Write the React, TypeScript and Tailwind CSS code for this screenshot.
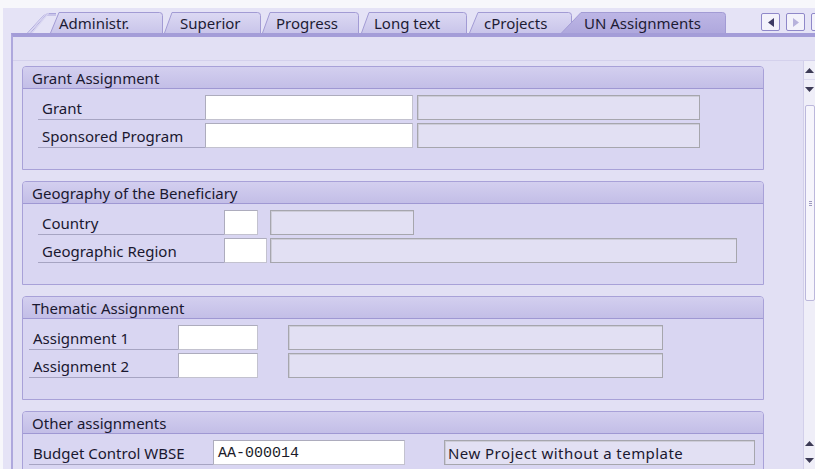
import React from "react";

type TabDef = { label: string; width: number; ml: number; slant: number; pl: number; active?: boolean };

const tabs: TabDef[] = [
  { label: "Administr.", width: 113, ml: -7, slant: 9, pl: 9 },
  { label: "Superior", width: 97, ml: 1, slant: 8, pl: 16 },
  { label: "Progress", width: 97, ml: 1, slant: 8, pl: 14 },
  { label: "Long text", width: 106, ml: 2, slant: 8, pl: 13 },
  { label: "cProjects", width: 103, ml: 2, slant: 9, pl: 15 },
  { label: "UN Assignments", width: 165, ml: -11, slant: 20, pl: 23, active: true },
];

function Tab({ t }: { t: TabDef }) {
  const w = t.width;
  const h = 21;
  const fillId = t.active ? "tabActive" : "tabIdle";
  return (
    <div
      className="relative flex-none h-[21px] flex items-center"
      style={{ width: w, marginLeft: t.ml, zIndex: t.active ? 2 : 1 }}
    >
      <svg className="absolute inset-0" width={w} height={h} viewBox={`0 0 ${w} ${h}`}>
        <defs>
          <linearGradient id="tabIdle" x1="0" y1="0" x2="0" y2="1">
            <stop offset="0" stopColor="#dcd9f3" />
            <stop offset="1" stopColor="#c9c5ea" />
          </linearGradient>
          <linearGradient id="tabActive" x1="0" y1="0" x2="0" y2="1">
            <stop offset="0" stopColor="#bdb6e5" />
            <stop offset="1" stopColor="#afa8dd" />
          </linearGradient>
        </defs>
        <path
          d={`M0.5 ${h} L${t.slant} 0.5 L${w - 3.5} 0.5 Q${w - 0.5} 0.5 ${w - 0.5} 3.5 L${w - 0.5} ${h}`}
          fill={`url(#${fillId})`}
          stroke="#a29bd4"
          strokeWidth="1"
        />
      </svg>
      <span className="relative leading-none text-[15px] text-[#1d1b34] pt-[1px]" style={{ paddingLeft: t.pl }}>
        {t.label}
      </span>
    </div>
  );
}

function StackMark() {
  // stacked-page marker in front of the first tab
  return (
    <svg className="flex-none ml-[24px]" width="30" height="21" viewBox="0 0 30 21">
      <path d="M0.5 21 L17 3 L29 3" fill="none" stroke="#aba5dc" strokeWidth="1" />
      <path d="M3.5 21 L20 1.5 L29 1.5" fill="none" stroke="#aba5dc" strokeWidth="1" />
      <path d="M2 21 L18.5 2.2" fill="none" stroke="#d7d4f0" strokeWidth="1.2" />
      <path d="M5 21 L21.5 1" fill="none" stroke="#d7d4f0" strokeWidth="1.2" />
    </svg>
  );
}

function NavButton({ children, dim }: { children: React.ReactNode; dim?: boolean }) {
  return (
    <div
      className={`flex-none w-[19px] h-[18px] rounded-[2px] border border-[#8f88c9] bg-[#f3f2fb] flex items-center justify-center ${
        dim ? "text-[#b7b2dc]" : "text-[#3d3a63]"
      }`}
    >
      {children}
    </div>
  );
}

function TabStrip() {
  return (
    <div className="h-[25px] flex items-start pt-[4px]">
      <StackMark />
      {tabs.map((t) => (
        <Tab key={t.label} t={t} />
      ))}
      <div className="flex gap-[6px] ml-[35px] mt-[1px]">
        <NavButton>
          <svg width="6" height="9" viewBox="0 0 6 9">
            <path d="M6 0 L0 4.5 L6 9 Z" fill="currentColor" />
          </svg>
        </NavButton>
        <NavButton dim>
          <svg width="6" height="9" viewBox="0 0 6 9">
            <path d="M0 0 L6 4.5 L0 9 Z" fill="currentColor" />
          </svg>
        </NavButton>
        <NavButton>
          <svg width="10" height="11" viewBox="0 0 10 11">
            <rect x="0.5" y="0.5" width="9" height="10" fill="none" stroke="currentColor" />
            <line x1="2" y1="3" x2="8" y2="3" stroke="currentColor" />
          </svg>
        </NavButton>
      </div>
    </div>
  );
}

function Label({ text, width, pl }: { text: string; width: number; pl?: number }) {
  return (
    <div
      className="flex-none h-[25px] border-b border-[#a6a4c2] flex items-center pt-[2px]"
      style={{ width, paddingLeft: pl ?? 4 }}
    >
      <span className="leading-none text-[15px] text-[#1a1830]">{text}</span>
    </div>
  );
}

function Input({ width, value, ml }: { width: number; value?: string; ml?: number }) {
  return (
    <div
      className="flex-none h-[25px] bg-white border border-[#c3c2cf] border-t-[#adacbd] border-l-[#adacbd] flex items-center pl-[4px] pt-[1px]"
      style={{ width, marginLeft: ml ?? 0 }}
    >
      {value && (
        <span className="font-['Liberation_Mono',monospace] text-[15px] leading-none text-[#1b1b2a]">{value}</span>
      )}
    </div>
  );
}

function Display({ width, ml, value }: { width: number; ml: number; value?: string }) {
  return (
    <div
      className="flex-none h-[25px] bg-[#e2e0f3] border border-[#a6a6ad] shadow-[inset_1px_1px_0_#cdccd8] flex items-center pl-[3px] pt-[2px]"
      style={{ width, marginLeft: ml }}
    >
      {value && <span className="text-[15px] leading-none tracking-[0.45px] text-[#1a1830]">{value}</span>}
    </div>
  );
}

function Group({ title, children }: { title: string; children: React.ReactNode }) {
  return (
    <div className="flex-none w-[742px] h-[104px] border border-[#a8a1d8] rounded-t-[4px] bg-[#d9d6f2] flex flex-col overflow-hidden">
      <div className="flex-none h-[22px] border-b border-[#9f98d3] bg-gradient-to-b from-[#d3cfef] to-[#c3bee7] flex items-center pl-[9px] pt-[1px]">
        <span className="leading-none text-[15px] text-[#1a1830]">{title}</span>
      </div>
      <div className="flex flex-col gap-[3px] pt-[6px]">{children}</div>
    </div>
  );
}

function Row({ children, indent }: { children: React.ReactNode; indent: number }) {
  return (
    <div className="flex items-start" style={{ paddingLeft: indent }}>
      {children}
    </div>
  );
}

function ScrollBar() {
  return (
    <div className="flex-none w-[12px] border-l border-[#d2cfea] bg-[#efeef8] flex flex-col">
      <div className="h-[19px] flex items-center justify-center border-b border-[#dcdaef]">
        <svg width="9" height="5" viewBox="0 0 9 5">
          <path d="M0 5 L4.5 0 L9 5 Z" fill="#3c3a55" />
        </svg>
      </div>
      <div className="h-[19px] flex items-center justify-center">
        <svg width="9" height="5" viewBox="0 0 9 5">
          <path d="M0 0 L4.5 5 L9 0 Z" fill="#3c3a55" />
        </svg>
      </div>
      <div className="mt-[6px] h-[196px] ml-[1px] border border-[#bcb8dc] rounded-[2px] bg-[#f6f5fc] flex flex-col items-center justify-center">
        <div className="flex flex-col gap-[1px]">
          <div className="w-[3px] h-[1px] bg-[#9d99bf]" />
          <div className="w-[3px] h-[1px] bg-[#9d99bf]" />
          <div className="w-[3px] h-[1px] bg-[#9d99bf]" />
        </div>
      </div>
      <div className="flex-1" />
      <div className="h-[17px] flex items-center justify-center">
        <svg width="9" height="5" viewBox="0 0 9 5">
          <path d="M0 5 L4.5 0 L9 5 Z" fill="#3c3a55" />
        </svg>
      </div>
      <div className="h-[17px] flex items-center justify-center">
        <svg width="9" height="5" viewBox="0 0 9 5">
          <path d="M0 0 L4.5 5 L9 0 Z" fill="#3c3a55" />
        </svg>
      </div>
    </div>
  );
}

export default function App() {
  return (
    <div className="w-[815px] h-[469px] overflow-hidden bg-[#f7f7fb] font-['Noto_Sans',sans-serif] text-[15px] text-[#1a1830] flex flex-col">
      <div className="flex-1 min-h-0 ml-[3px] mt-[8px] bg-[#e5e3f6] flex flex-col">
        <TabStrip />
        <div className="flex-1 min-h-0 ml-[8px] border-t-[4px] border-t-[#a49dd8] border-l-[2px] border-l-[#aea8dd] bg-[#e2e0f4] flex flex-col">
          <div className="flex-none h-[23px]" />
          <div className="flex-1 min-h-0 border-t border-[#d4d1ec] flex">
            <div className="flex-1 min-w-0 pl-[9px] pt-[5px] flex flex-col gap-[11px]">
              <Group title="Grant Assignment">
                <Row indent={15}>
                  <Label text="Grant" width={167} />
                  <Input width={208} />
                  <Display width={283} ml={4} />
                </Row>
                <Row indent={15}>
                  <Label text="Sponsored Program" width={167} />
                  <Input width={208} />
                  <Display width={283} ml={4} />
                </Row>
              </Group>
              <Group title="Geography of the Beneficiary">
                <Row indent={15}>
                  <Label text="Country" width={186} />
                  <Input width={34} />
                  <Display width={144} ml={12} />
                </Row>
                <Row indent={15}>
                  <Label text="Geographic Region" width={186} />
                  <Input width={43} />
                  <Display width={467} ml={3} />
                </Row>
              </Group>
              <Group title="Thematic Assignment">
                <Row indent={6}>
                  <Label text="Assignment 1" width={149} />
                  <Input width={80} />
                  <Display width={375} ml={30} />
                </Row>
                <Row indent={6}>
                  <Label text="Assignment 2" width={149} />
                  <Input width={80} />
                  <Display width={375} ml={30} />
                </Row>
              </Group>
              <Group title="Other assignments">
                <Row indent={6}>
                  <Label text="Budget Control WBSE" width={184} />
                  <Input width={192} value="AA-000014" />
                  <Display width={311} ml={39} value="New Project without a template" />
                </Row>
              </Group>
            </div>
            <ScrollBar />
          </div>
        </div>
      </div>
    </div>
  );
}
